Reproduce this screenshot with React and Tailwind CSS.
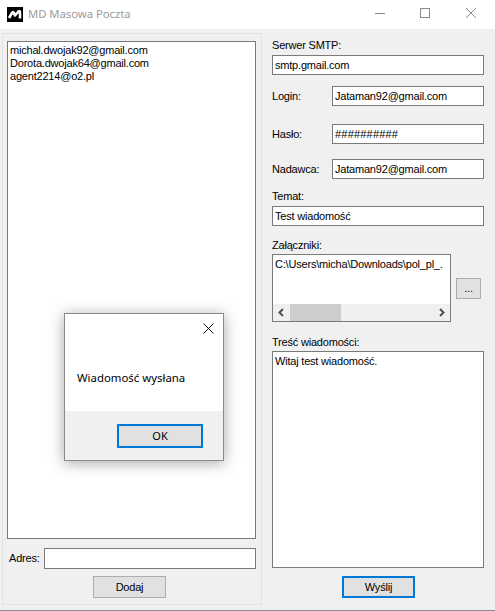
const sans = "font-['Liberation_Sans',Arial,sans-serif]";
const t = "text-[11px] tracking-[-0.2px] text-black";

function Box({ className = "", children }) {
  return (
    <div className={`bg-white border border-[#7a7a7a] h-5 flex items-center px-[2px] leading-none whitespace-nowrap overflow-hidden ${t} ${className}`}>
      {children}
    </div>
  );
}

function Btn({ className = "", focus, children }) {
  return (
    <div className={`bg-[#e1e1e1] flex items-center justify-center ${t} ${focus ? "border-2 border-[#0078d7]" : "border border-[#adadad]"} ${className}`}>
      {children}
    </div>
  );
}

function Row({ label, value, className = "" }) {
  return (
    <div className={`flex items-center ${className}`}>
      <span className={`w-[60px] leading-none ${t}`}>{label}</span>
      <Box className="w-[152px]">{value}</Box>
    </div>
  );
}

export default function App() {
  return (
    <div className={`relative w-[495px] h-[611px] flex flex-col overflow-hidden bg-[#f0f0f0] border-b border-[#8c8c8c] ${sans}`}>
      <div className="h-[29px] shrink-0 bg-white flex items-center">
        <svg className="ml-[7px]" width="16" height="15" viewBox="0 0 16 15">
          <rect width="16" height="15" fill="#000" />
          <path d="M2 11 L5 6 Q6 4 7 6 L8 8.5 L11.5 4.5 Q13 3 13 6 L13 11.5" fill="none" stroke="#fff" strokeWidth="2.6" strokeLinejoin="round" />
        </svg>
        <span className="ml-[5px] text-[11.25px] text-[#9a9a9a] font-['Noto_Sans',sans-serif]">MD Masowa Poczta</span>
        <svg className="ml-auto" width="120" height="29" viewBox="0 0 120 29" fill="none" stroke="#8a8a8a" strokeWidth="1" shapeRendering="crispEdges">
          <path d="M0 13.5 H10" />
          <rect x="45.5" y="8.5" width="9" height="9" />
          <path d="M91 8 L101 18 M101 8 L91 18" shapeRendering="auto" />
        </svg>
      </div>

      <div className="flex-1 flex pl-[2px] pt-[4px] pb-[5px]">
        <div className="w-[260px] h-full border border-[#e3e3e3] flex flex-col pl-[4px] pr-[5px] pt-[7px]">
          <div className={`h-[498px] bg-white border border-[#7a7a7a] px-[2px] pt-[2px] leading-[13px] ${t}`}>
            <div>michal.dwojak92@gmail.com</div>
            <div>Dorota.dwojak64@gmail.com</div>
            <div>agent2214@o2.pl</div>
          </div>
          <div className="mt-[9px] flex items-center">
            <span className={`w-[37px] pl-[2px] leading-none ${t}`}>Adres:</span>
            <Box className="flex-1 h-[21px]" />
          </div>
          <div className="mt-[7px] flex justify-center pr-[4px]">
            <Btn className="w-[73px] h-[22px]">Dodaj</Btn>
          </div>
        </div>

        <div className="w-[212px] ml-[10px] flex flex-col pt-[6px]">
          <div className={`h-[14px] leading-[12px] ${t}`}>Serwer SMTP:</div>
          <Box className="mt-[2px] w-[212px] h-[20px]">smtp.gmail.com</Box>
          <Row className="mt-[11px]" label="Login:" value="Jataman92@gmail.com" />
          <Row className="mt-[18px]" label="Hasło:" value={<span className="tracking-[0.2px]">##########</span>} />
          <Row className="mt-[15px]" label="Nadawca:" value="Jataman92@gmail.com" />
          <div className={`mt-[11px] h-[14px] leading-[12px] ${t}`}>Temat:</div>
          <Box className="mt-[2px] w-[212px]">Test wiadomość</Box>
          <div className={`mt-[12px] h-[14px] leading-[14px] ${t}`}>Załączniki:</div>
          <div className="mt-[2px] flex items-center">
            <div className="w-[179px] h-[68px] bg-white border border-[#7a7a7a] flex flex-col">
              <div className={`flex-1 px-[2px] pt-[2px] leading-[14px] whitespace-nowrap overflow-hidden ${t}`}>C:\Users\micha\Downloads\pol_pl_.</div>
              <div className="h-[17px] bg-[#f0f0f0] flex items-center justify-between">
                <div className="flex items-center h-full">
                  <svg className="w-[17px]" width="17" height="17" viewBox="0 0 17 17" fill="none" stroke="#505050" strokeWidth="2"><path d="M10 5 L6.5 8.5 L10 12" /></svg>
                  <div className="w-[51px] h-full bg-[#cdcdcd]" />
                </div>
                <svg width="17" height="17" viewBox="0 0 17 17" fill="none" stroke="#505050" strokeWidth="2"><path d="M7 5 L10.5 8.5 L7 12" /></svg>
              </div>
            </div>
            <Btn className="ml-[5px] w-[25px] h-[21px] mt-[1px]">...</Btn>
          </div>
          <div className={`mt-[13px] h-[14px] leading-[14px] ${t}`}>Treść wiadomości:</div>
          <div className={`mt-[2px] h-[217px] bg-white border border-[#7a7a7a] px-[2px] pt-[2px] leading-[14px] ${t}`}>Witaj test wiadomość.</div>
          <div className="mt-[8px] flex justify-center pl-[1px]">
            <Btn focus className="w-[73px] h-[22px]">Wyślij</Btn>
          </div>
        </div>
      </div>

      <div className="absolute left-[64px] top-[313px] w-[160px] h-[148px] bg-[#f0f0f0] border border-[#8a8a8a] shadow-[0_2px_14px_rgba(0,0,0,0.35)] flex flex-col">
        <div className="h-[97px] bg-white relative">
          <svg className="absolute right-[9px] top-[9px]" width="11" height="11" viewBox="0 0 11 11" fill="none" stroke="#111" strokeWidth="1"><path d="M0.5 0.5 L10.5 10.5 M10.5 0.5 L0.5 10.5" /></svg>
          <div className="pl-[12px] pt-[57px] text-[11.4px] leading-[14px] text-black font-['Noto_Sans',sans-serif]">Wiadomość wysłana</div>
        </div>
        <div className="pl-[52px] pt-[13px]">
          <Btn focus className="w-[86px] h-[24px] font-['Noto_Sans',sans-serif] tracking-normal">OK</Btn>
        </div>
      </div>
    </div>
  );
}
